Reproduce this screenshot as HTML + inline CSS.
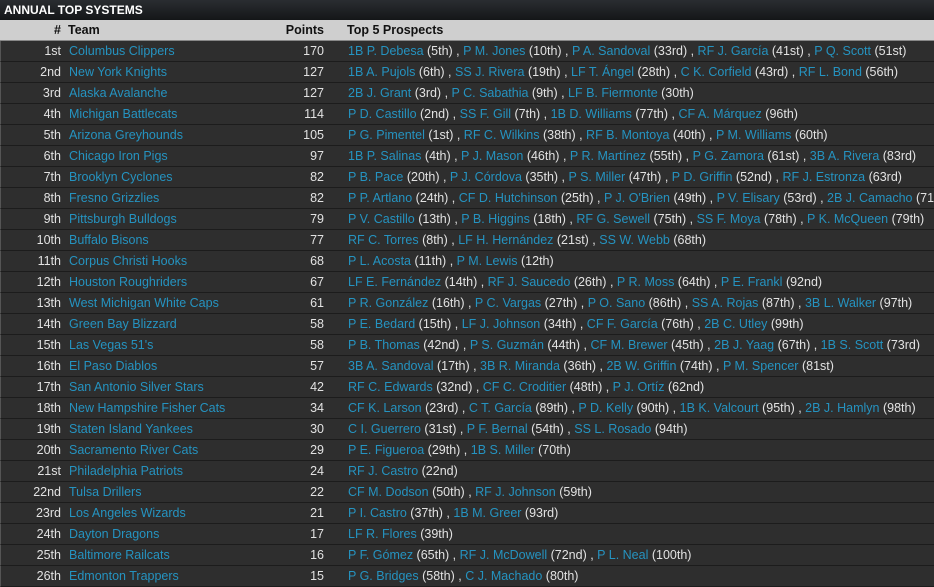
<!DOCTYPE html><html><head><meta charset="utf-8"><style>
*{margin:0;padding:0;box-sizing:border-box}
body{width:934px;height:584px;overflow:hidden;background:#2d2d2d;font-family:"Liberation Sans",sans-serif;font-size:12.5px;color:#e2e2e2}
.tt{height:20px;background:linear-gradient(#2a2d31,#141618);color:#fff;font-weight:bold;font-size:12px;padding-left:4px;line-height:20px}
.h{height:21px;background:#cfcfcf;color:#111;font-weight:bold;position:relative;border-bottom:1px solid #888}
.r{height:21px;position:relative;border-bottom:1px solid #1c1c1c;background:#2e2e2e;border-left:1px solid #555}
.h span,.r span{position:absolute;top:0;line-height:20px;white-space:nowrap}
.a{right:873px;text-align:right}
.b{left:68px}
.c{right:610px;text-align:right}
.d{left:347px}
a{color:#2593c0;text-decoration:none}
</style></head><body>
<div class="tt">ANNUAL TOP SYSTEMS</div>
<div class="h"><span class="a">#</span><span class="b">Team</span><span class="c">Points</span><span class="d">Top 5 Prospects</span></div>
<div class="r"><span class="a">1st</span><span class="b"><a>Columbus Clippers</a></span><span class="c">170</span><span class="d"><a>1B P. Debesa</a> (5th) , <a>P M. Jones</a> (10th) , <a>P A. Sandoval</a> (33rd) , <a>RF J. García</a> (41st) , <a>P Q. Scott</a> (51st)</span></div>
<div class="r"><span class="a">2nd</span><span class="b"><a>New York Knights</a></span><span class="c">127</span><span class="d"><a>1B A. Pujols</a> (6th) , <a>SS J. Rivera</a> (19th) , <a>LF T. Ángel</a> (28th) , <a>C K. Corfield</a> (43rd) , <a>RF L. Bond</a> (56th)</span></div>
<div class="r"><span class="a">3rd</span><span class="b"><a>Alaska Avalanche</a></span><span class="c">127</span><span class="d"><a>2B J. Grant</a> (3rd) , <a>P C. Sabathia</a> (9th) , <a>LF B. Fiermonte</a> (30th)</span></div>
<div class="r"><span class="a">4th</span><span class="b"><a>Michigan Battlecats</a></span><span class="c">114</span><span class="d"><a>P D. Castillo</a> (2nd) , <a>SS F. Gill</a> (7th) , <a>1B D. Williams</a> (77th) , <a>CF A. Márquez</a> (96th)</span></div>
<div class="r"><span class="a">5th</span><span class="b"><a>Arizona Greyhounds</a></span><span class="c">105</span><span class="d"><a>P G. Pimentel</a> (1st) , <a>RF C. Wilkins</a> (38th) , <a>RF B. Montoya</a> (40th) , <a>P M. Williams</a> (60th)</span></div>
<div class="r"><span class="a">6th</span><span class="b"><a>Chicago Iron Pigs</a></span><span class="c">97</span><span class="d"><a>1B P. Salinas</a> (4th) , <a>P J. Mason</a> (46th) , <a>P R. Martínez</a> (55th) , <a>P G. Zamora</a> (61st) , <a>3B A. Rivera</a> (83rd)</span></div>
<div class="r"><span class="a">7th</span><span class="b"><a>Brooklyn Cyclones</a></span><span class="c">82</span><span class="d"><a>P B. Pace</a> (20th) , <a>P J. Córdova</a> (35th) , <a>P S. Miller</a> (47th) , <a>P D. Griffin</a> (52nd) , <a>RF J. Estronza</a> (63rd)</span></div>
<div class="r"><span class="a">8th</span><span class="b"><a>Fresno Grizzlies</a></span><span class="c">82</span><span class="d"><a>P P. Artlano</a> (24th) , <a>CF D. Hutchinson</a> (25th) , <a>P J. O'Brien</a> (49th) , <a>P V. Elisary</a> (53rd) , <a>2B J. Camacho</a> (71st)</span></div>
<div class="r"><span class="a">9th</span><span class="b"><a>Pittsburgh Bulldogs</a></span><span class="c">79</span><span class="d"><a>P V. Castillo</a> (13th) , <a>P B. Higgins</a> (18th) , <a>RF G. Sewell</a> (75th) , <a>SS F. Moya</a> (78th) , <a>P K. McQueen</a> (79th)</span></div>
<div class="r"><span class="a">10th</span><span class="b"><a>Buffalo Bisons</a></span><span class="c">77</span><span class="d"><a>RF C. Torres</a> (8th) , <a>LF H. Hernández</a> (21st) , <a>SS W. Webb</a> (68th)</span></div>
<div class="r"><span class="a">11th</span><span class="b"><a>Corpus Christi Hooks</a></span><span class="c">68</span><span class="d"><a>P L. Acosta</a> (11th) , <a>P M. Lewis</a> (12th)</span></div>
<div class="r"><span class="a">12th</span><span class="b"><a>Houston Roughriders</a></span><span class="c">67</span><span class="d"><a>LF E. Fernández</a> (14th) , <a>RF J. Saucedo</a> (26th) , <a>P R. Moss</a> (64th) , <a>P E. Frankl</a> (92nd)</span></div>
<div class="r"><span class="a">13th</span><span class="b"><a>West Michigan White Caps</a></span><span class="c">61</span><span class="d"><a>P R. González</a> (16th) , <a>P C. Vargas</a> (27th) , <a>P O. Sano</a> (86th) , <a>SS A. Rojas</a> (87th) , <a>3B L. Walker</a> (97th)</span></div>
<div class="r"><span class="a">14th</span><span class="b"><a>Green Bay Blizzard</a></span><span class="c">58</span><span class="d"><a>P E. Bedard</a> (15th) , <a>LF J. Johnson</a> (34th) , <a>CF F. García</a> (76th) , <a>2B C. Utley</a> (99th)</span></div>
<div class="r"><span class="a">15th</span><span class="b"><a>Las Vegas 51's</a></span><span class="c">58</span><span class="d"><a>P B. Thomas</a> (42nd) , <a>P S. Guzmán</a> (44th) , <a>CF M. Brewer</a> (45th) , <a>2B J. Yaag</a> (67th) , <a>1B S. Scott</a> (73rd)</span></div>
<div class="r"><span class="a">16th</span><span class="b"><a>El Paso Diablos</a></span><span class="c">57</span><span class="d"><a>3B A. Sandoval</a> (17th) , <a>3B R. Miranda</a> (36th) , <a>2B W. Griffin</a> (74th) , <a>P M. Spencer</a> (81st)</span></div>
<div class="r"><span class="a">17th</span><span class="b"><a>San Antonio Silver Stars</a></span><span class="c">42</span><span class="d"><a>RF C. Edwards</a> (32nd) , <a>CF C. Croditier</a> (48th) , <a>P J. Ortíz</a> (62nd)</span></div>
<div class="r"><span class="a">18th</span><span class="b"><a>New Hampshire Fisher Cats</a></span><span class="c">34</span><span class="d"><a>CF K. Larson</a> (23rd) , <a>C T. García</a> (89th) , <a>P D. Kelly</a> (90th) , <a>1B K. Valcourt</a> (95th) , <a>2B J. Hamlyn</a> (98th)</span></div>
<div class="r"><span class="a">19th</span><span class="b"><a>Staten Island Yankees</a></span><span class="c">30</span><span class="d"><a>C I. Guerrero</a> (31st) , <a>P F. Bernal</a> (54th) , <a>SS L. Rosado</a> (94th)</span></div>
<div class="r"><span class="a">20th</span><span class="b"><a>Sacramento River Cats</a></span><span class="c">29</span><span class="d"><a>P E. Figueroa</a> (29th) , <a>1B S. Miller</a> (70th)</span></div>
<div class="r"><span class="a">21st</span><span class="b"><a>Philadelphia Patriots</a></span><span class="c">24</span><span class="d"><a>RF J. Castro</a> (22nd)</span></div>
<div class="r"><span class="a">22nd</span><span class="b"><a>Tulsa Drillers</a></span><span class="c">22</span><span class="d"><a>CF M. Dodson</a> (50th) , <a>RF J. Johnson</a> (59th)</span></div>
<div class="r"><span class="a">23rd</span><span class="b"><a>Los Angeles Wizards</a></span><span class="c">21</span><span class="d"><a>P I. Castro</a> (37th) , <a>1B M. Greer</a> (93rd)</span></div>
<div class="r"><span class="a">24th</span><span class="b"><a>Dayton Dragons</a></span><span class="c">17</span><span class="d"><a>LF R. Flores</a> (39th)</span></div>
<div class="r"><span class="a">25th</span><span class="b"><a>Baltimore Railcats</a></span><span class="c">16</span><span class="d"><a>P F. Gómez</a> (65th) , <a>RF J. McDowell</a> (72nd) , <a>P L. Neal</a> (100th)</span></div>
<div class="r"><span class="a">26th</span><span class="b"><a>Edmonton Trappers</a></span><span class="c">15</span><span class="d"><a>P G. Bridges</a> (58th) , <a>C J. Machado</a> (80th)</span></div>
</body></html>
